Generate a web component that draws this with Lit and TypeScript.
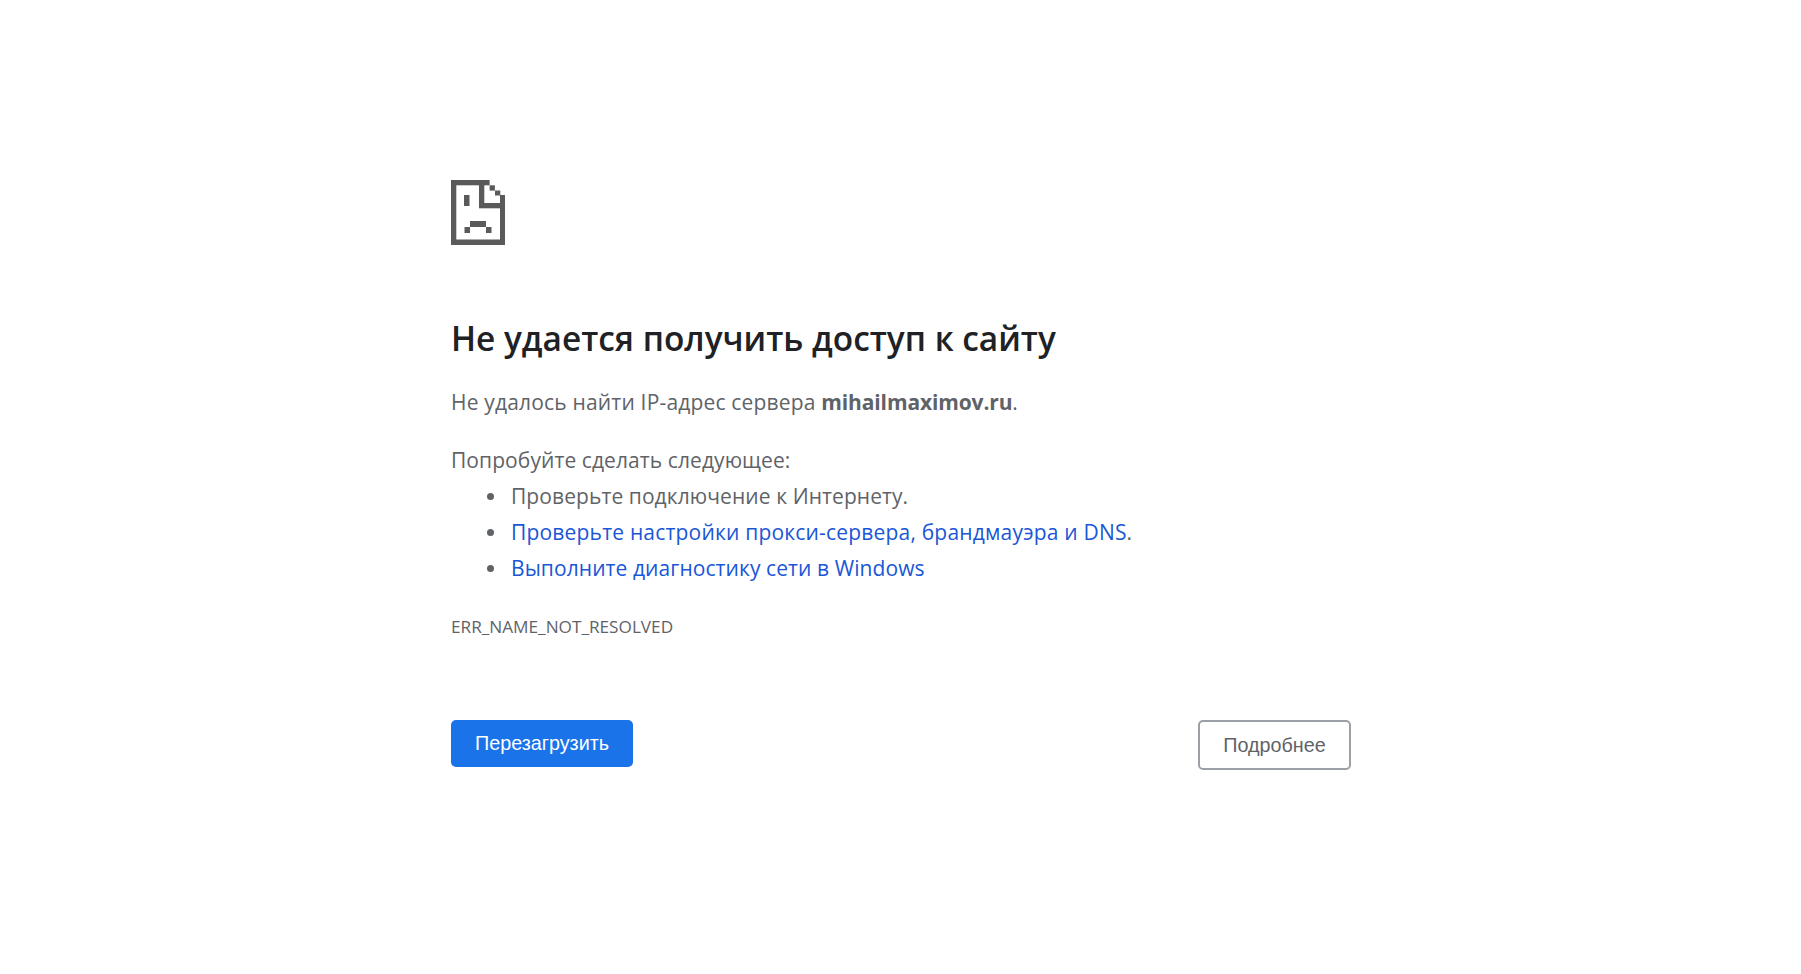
import { LitElement, html, css, svg } from "lit";
import { customElement } from "lit/decorators.js";

const rects: [number, number, number, number][] = [
  [0, 0, 5.3, 65],
  [0, 0, 38.6, 5.3],
  [0, 59.5, 54, 5.5],
  [49, 15, 5, 50],
  [28, 0, 5.3, 28],
  [28, 23, 22, 5.3],
  [38.6, 5.3, 5.3, 5.3],
  [44, 10.5, 5.3, 5],
  [13, 15, 5.5, 11],
  [19, 41, 16, 6],
  [13.5, 47, 5.5, 6],
  [35, 47, 5.5, 6],
];

@customElement("app-root")
export class AppRoot extends LitElement {
  static styles = css`
    :host {
      display: block;
      min-height: 974px;
      background: #fff;
      font-family: "Open Sans", "Noto Sans", sans-serif;
      color: #5f6368;
      font-size: 21px;
      letter-spacing: 0.08px;
    }
    .wrap {
      width: 900px;
      padding-top: 180px;
      margin-left: 451px;
    }
    svg.icon {
      display: block;
      width: 54px;
      height: 65px;
      fill: #5a5a5a;
    }
    h1 {
      margin: 69.6px 0 0;
      font-size: 33.4px;
      line-height: 46px;
      font-weight: 600;
      letter-spacing: 0;
      color: #202124;
    }
    p {
      margin: 0;
      line-height: 36px;
    }
    .first {
      margin-top: 23px;
      letter-spacing: 0.18px;
    }
    .first b {
      letter-spacing: -0.13px;
    }
    .second {
      margin-top: 22px;
    }
    ul {
      margin: 0;
      padding-left: 60px;
      list-style: none;
    }
    li {
      position: relative;
      line-height: 36px;
    }
    li::before {
      content: "";
      position: absolute;
      left: -24px;
      top: 15px;
      width: 7px;
      height: 7px;
      border-radius: 50%;
      background: #5f6368;
    }
    a {
      color: #1a56d6;
      text-decoration: none;
    }
    .wide {
      letter-spacing: 0.19px;
    }
    .code {
      margin-top: 23px;
      font-size: 17.2px;
      line-height: 36px;
      letter-spacing: 0;
    }
    .buttons {
      display: flex;
      justify-content: space-between;
      align-items: flex-start;
      margin-top: 75px;
      font-family: "Liberation Sans", Arial, sans-serif;
      letter-spacing: 0;
    }
    button {
      font: inherit;
      font-size: 19.75px;
      border-radius: 5px;
      cursor: pointer;
    }
    .reload {
      width: 182px;
      height: 47px;
      border: none;
      background: #1a73e8;
      color: #fff;
    }
    .more {
      width: 153px;
      height: 50px;
      padding-top: 3px;
      border: 2px solid #9aa0a6;
      background: #fff;
      color: #5f6368;
    }
  `;

  render() {
    return html`
      <div class="wrap">
        <svg class="icon" viewBox="0 0 54 65" aria-hidden="true">
          ${rects.map(([x, y, w, h]) => svg`<rect x=${x} y=${y} width=${w} height=${h}></rect>`)}
        </svg>
        <h1>Не удается получить доступ к сайту</h1>
        <p class="first">Не удалось найти IP-адрес сервера <b>mihailmaximov.ru</b>.</p>
        <p class="second">Попробуйте сделать следующее:</p>
        <ul>
          <li>Проверьте подключение к Интернету.</li>
          <li class="wide"><a href="#">Проверьте настройки прокси-сервера, брандмауэра и DNS</a>.</li>
          <li><a href="#">Выполните диагностику сети в Windows</a></li>
        </ul>
        <div class="code">ERR_NAME_NOT_RESOLVED</div>
        <div class="buttons">
          <button class="reload">Перезагрузить</button>
          <button class="more">Подробнее</button>
        </div>
      </div>
    `;
  }
}
